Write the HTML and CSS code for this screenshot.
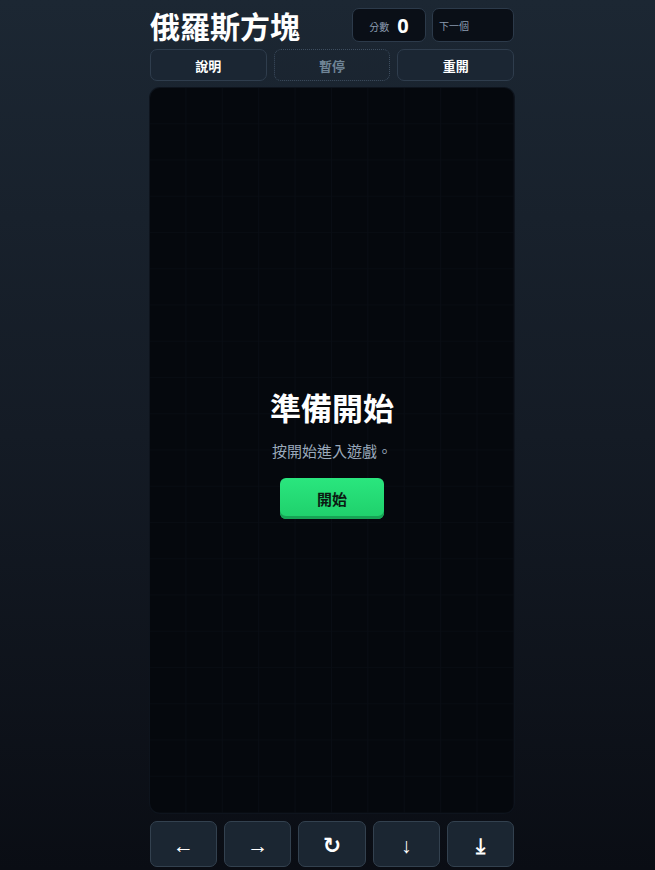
FILE: index.html
```html
<!DOCTYPE html>
<html lang="zh-Hant">
<head>
<meta charset="utf-8">
<title>俄羅斯方塊</title>
<link rel="stylesheet" href="styles.css">
</head>
<body>
<div class="page">
  <main class="app">
    <header class="top">
      <h1 class="title">俄羅斯方塊</h1>
      <div class="stats">
        <div class="box score"><span class="label">分數</span><span class="value">0</span></div>
        <div class="box next"><span class="label">下一個</span></div>
      </div>
    </header>
    <nav class="actions">
      <button class="btn">說明</button>
      <button class="btn disabled">暫停</button>
      <button class="btn">重開</button>
    </nav>
    <section class="board">
      <div class="overlay">
        <h2 class="ready">準備開始</h2>
        <p class="hint">按開始進入遊戲。</p>
        <button class="start">開始</button>
      </div>
    </section>
    <nav class="controls">
      <button class="ctrl">←</button>
      <button class="ctrl">→</button>
      <button class="ctrl rot">↻</button>
      <button class="ctrl">↓</button>
      <button class="ctrl">⤓</button>
    </nav>
  </main>
</div>
</body>
</html>
```
FILE: styles.css
```css
html, body {
  margin: 0;
  height: 100%;
}
body {
  background: linear-gradient(180deg, #1c2733 0%, #141b25 50%, #0a0d14 100%);
  font-family: "Noto Sans CJK TC", "Noto Sans", sans-serif;
  color: #fff;
  overflow: hidden;
}
.page {
  display: flex;
  justify-content: center;
  padding: 8px 0 0 9px;
}
.app {
  width: 364px;
  display: flex;
  flex-direction: column;
  gap: 7px;
}
.top {
  display: flex;
  align-items: center;
  justify-content: space-between;
  height: 34px;
}
.title {
  margin: 0;
  font-size: 30px;
  font-weight: 700;
  line-height: 34px;
}
.stats {
  display: flex;
  gap: 6px;
}
.box {
  border: 1px solid #2c3a4a;
  border-radius: 7px;
  background: #0a0f17;
  display: flex;
  align-items: center;
  box-sizing: border-box;
  height: 34px;
}
.score {
  width: 74px;
  justify-content: center;
  gap: 8px;
  padding-top: 2px;
}
.next {
  width: 82px;
  padding-left: 6px;
}
.label {
  font-size: 10px;
  color: #8b9bb0;
}
.value {
  font-size: 20px;
  font-weight: 700;
  font-family: "Noto Sans", sans-serif;
  line-height: 1;
}
.actions {
  display: grid;
  grid-template-columns: repeat(3, 1fr);
  gap: 7px;
}
.btn {
  height: 32px;
  border: 1px solid #2f3d4d;
  border-radius: 7px;
  background: #1b2633;
  color: #fff;
  font-family: "Noto Sans CJK TC", sans-serif;
  font-weight: 700;
  font-size: 13px;
}
.btn.disabled {
  border: 1px dotted #3e4e60;
  color: #6f8496;
  background: transparent;
}
.board {
  height: 725px;
  border-radius: 10px;
  background-color: #05080d;
  background-image:
    linear-gradient(90deg, #090d14 1px, transparent 1px),
    linear-gradient(180deg, #080c12 1px, transparent 1px);
  background-size: 36.4px 36.25px;
  background-position: -1px -1px;
  box-shadow: 0 0 0 1px #0e141d;
  display: flex;
  align-items: center;
  justify-content: center;
}
.overlay {
  display: flex;
  flex-direction: column;
  align-items: center;
  margin-top: 4px;
}
.ready {
  margin: 0;
  font-size: 31px;
  font-weight: 700;
  line-height: 40px;
}
.hint {
  margin: 14px 0 17px;
  font-size: 15px;
  color: #9aa9bb;
  line-height: 20px;
}
.start {
  width: 104px;
  height: 41px;
  border: none;
  border-radius: 6px;
  background: linear-gradient(180deg, #2ae67e 0%, #1fcf6b 100%);
  box-shadow: inset 0 -3px 0 #17a355;
  color: #0b1a12;
  font-family: "Noto Sans CJK TC", sans-serif;
  font-weight: 700;
  font-size: 15px;
}
.controls {
  display: grid;
  grid-template-columns: repeat(5, 1fr);
  gap: 7px;
  margin-top: 1px;
}
.ctrl {
  height: 46px;
  border: 1px solid #33414f;
  border-radius: 7px;
  background: #1b2632;
  color: #fff;
  font-family: "Liberation Sans", "DejaVu Sans", sans-serif;
  font-weight: 700;
  font-size: 21px;
  padding-top: 4px;
}
.ctrl.rot {
  font-family: "DejaVu Sans", sans-serif;
  font-size: 22px;
}
```
